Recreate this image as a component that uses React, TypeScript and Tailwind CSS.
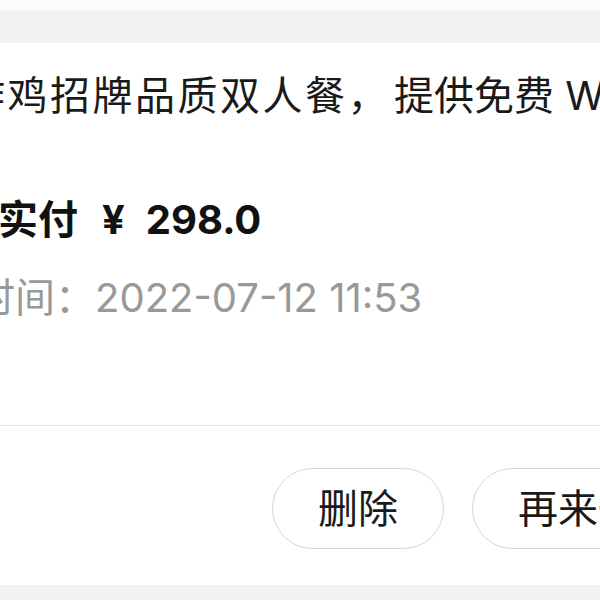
export default function App() {
  const font = { fontFamily: 'Inter, "Noto Sans CJK SC", sans-serif' };

  return (
    <div
      className="w-[600px] h-[600px] overflow-hidden bg-[#f2f2f2] flex flex-col"
      style={font}
    >
      {/* 上一张卡片的底部 */}
      <div className="h-[10px] bg-[#fbfbfb] shrink-0" />
      <div className="h-[33px] shrink-0" />

      {/* 订单卡片 */}
      <div className="h-[542px] shrink-0 bg-white flex flex-col">
        <div className="h-[382px] pt-[33px] flex flex-col">
          <div className="-ml-[35px] whitespace-nowrap text-[40px] leading-[40px] text-[#1a1a1a]">
            <span className="tracking-[2.5px]">炸鸡招牌品质双人餐，</span>
            <span className="ml-[4px]">提供免费 Wi-Fi</span>
          </div>
          <div className="mt-[84px] -ml-[2px] whitespace-nowrap text-[40px] leading-[40px] font-bold text-[#111]">
            <span>实付</span>
            <span className="ml-[24px]">¥</span>
            <span className="ml-[21px]">298.0</span>
          </div>
          <div className="mt-[38px] -ml-[25px] whitespace-nowrap text-[40px] leading-[40px] text-[#999]">
            时间：2022-07-12 11:53
          </div>
        </div>

        <div className="h-px bg-[#e6e6e6]" />

        <div className="flex gap-[28px] pl-[272px] pt-[42px] whitespace-nowrap">
          <button className="shrink-0 px-[45px] h-[81px] rounded-full border-[1.5px] border-[#d6d6d6] bg-white text-[40px] leading-none text-[#1a1a1a]">
            删除
          </button>
          <button className="shrink-0 px-[45px] h-[81px] rounded-full border-[1.5px] border-[#d6d6d6] bg-white text-[40px] leading-none text-[#1a1a1a]">
            再来一单
          </button>
        </div>
      </div>
    </div>
  );
}
